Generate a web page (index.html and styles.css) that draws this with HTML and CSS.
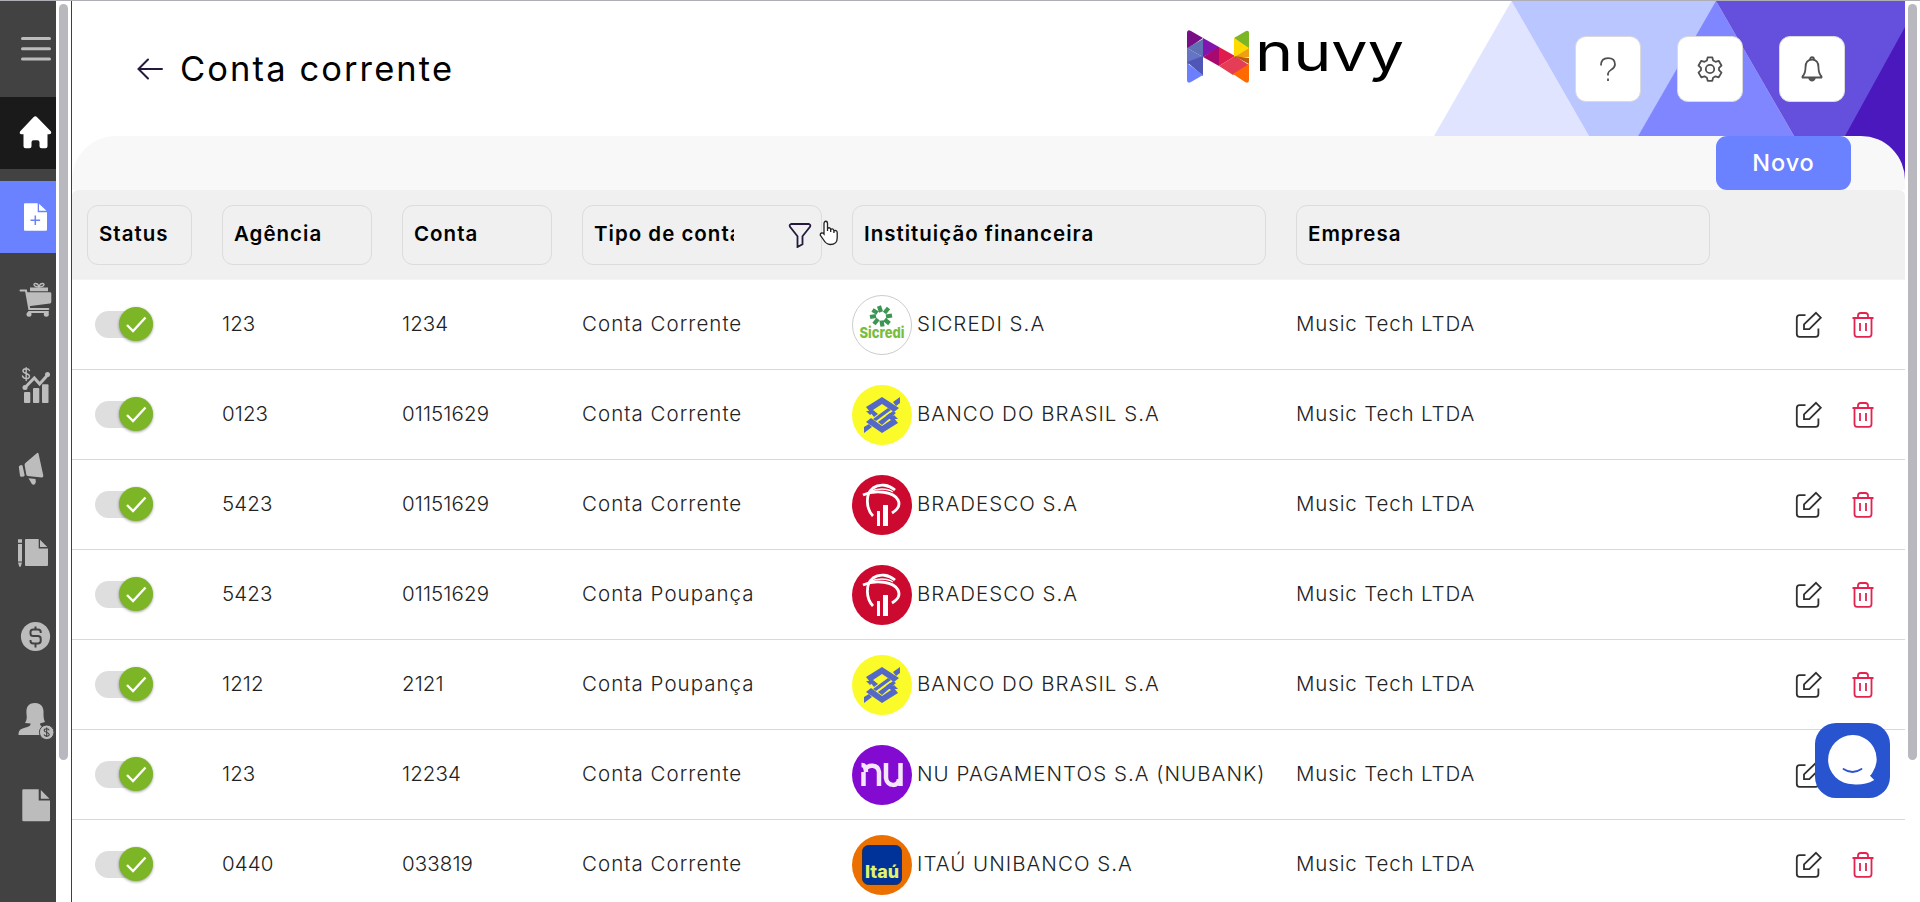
FILE: index.html
```
<!DOCTYPE html>
<html lang="pt-BR">
<head>
  <meta charset="UTF-8" />
  <meta name="viewport" content="width=device-width, initial-scale=1.0" />
  <title>Conta corrente</title>
  <link rel="stylesheet" href="styles.css">
</head>
<body>
  <!-- shared icons -->
  <svg class="sprite" aria-hidden="true">
    <symbol id="icon-edit" viewBox="0 0 28 28">
      <path d="M10.5 4.2H4.6Q1.8 4.2 1.8 7v16q0 2.8 2.8 2.8h16q2.8 0 2.8-2.8v-5.6" />
      <path d="M21 1.8l4.8 4.9L14.3 18.2H9v-4.9z" />
    </symbol>
    <symbol id="icon-trash" viewBox="0 0 24 28">
      <path d="M1.5 7h21M7 6.5V4.6Q7 2 9.6 2h4.8Q17 2 17 4.6v1.9M3.5 7v16q0 2.8 2.500 2.800h12q2.500 0 2.500-2.800V7M9 12v8M15 12v8" />
    </symbol>
    <symbol id="logo-sicredi" viewBox="0 0 60 60">
      <circle cx="30" cy="30" r="29.5" fill="#fff" stroke="#ccc" />
      <g stroke="#3c9553" stroke-width="4.2">
        <path d="M29 17l-2-6M32.500 18l4-5M34 21.500l6-1M32.500 24.500l5 4M29.500 25.500l1 6M26 24l-4 5M24 21l-6 1M25.500 18l-5-3" />
      </g>
      <text x="30" y="43" class="sicredi-text" text-anchor="middle" textLength="45" lengthAdjust="spacingAndGlyphs">Sicredi</text>
    </symbol>
    <symbol id="logo-bb" viewBox="0 0 60 60">
      <circle cx="30" cy="30" r="30" fill="#fbfb29" />
      <g fill="#5468c8">
        <path d="M14 22l16-10 17 11-5 4-12-8-9 6 5 4-4 3z" />
        <path d="M46 38L30 48 14 37l5-4 11 8 9-6-5-4 4-3z" />
        <path d="M14 26h9l-5 4zM46 34h-9l5-4zM41 17l7-5v6l-4 3zM12 42l5-3 3 3-8 6z" />
        <path d="M21 34l15-11 3 2-15 11zM26 37l15-11 3 2-14 12z" />
      </g>
    </symbol>
    <symbol id="logo-bradesco" viewBox="0 0 60 60">
      <circle cx="30" cy="30" r="30" fill="#cc092f" />
      <g fill="none" stroke="#fff">
        <path d="M21 41C14 34 13 19 21 13c7-5 16-3 22 2" stroke-width="2.8" />
        <path d="M11 20c13-6 31-3 35 5 3 6-1 10-6 13" stroke-width="2.8" />
        <path d="M17 17c8-4 18-4 24 0" stroke-width="1.4" />
      </g>
      <path d="M25 36h3v15h-3zM31 30h5v21h-5z" fill="#fff" />
    </symbol>
    <symbol id="logo-nubank" viewBox="0 0 60 60">
      <circle cx="30" cy="30" r="30" fill="#820ad1" />
      <path d="M11.500 41V27M9.500 20c4 0 4.500 4 4.500 7M13 25c3-6 13-6 14 2v14M34 18v15c1 9 13 9 13 1M48.500 18v23" fill="none" stroke="#f4e6fb" stroke-width="4.5" />
    </symbol>
    <symbol id="logo-itau" viewBox="0 0 60 60">
      <circle cx="30" cy="30" r="30" fill="#ec7000" />
      <rect x="10.500" y="10.500" width="39" height="39" rx="6" fill="#003399" stroke="#27314f" stroke-width="1" />
      <text x="30" y="43" class="itau-text" text-anchor="middle" textLength="34" lengthAdjust="spacingAndGlyphs">Itaú</text>
    </symbol>
  </svg>

  <nav class="sidebar">
    <a class="nav-item menu"><svg viewBox="0 0 40 40"><path class="line" d="M6.5 9.500h27M6.500 19.800h27M6.500 30h27" /></svg></a>
    <a class="nav-item home"><svg viewBox="0 0 40 40"><path d="M17.700 4Q19.300 2.600 20.900 4L35 18.500q1 2.800-2 2.800h-1.500v12q0 2-2 2h-4q-2 0-2-2v-4q0-2-2-2h-4q-2 0-2 2v4q0 2-2 2h-4q-2 0-2-2v-12H5.500q-2.500 0-1.500-2.800z" /></svg></a>
    <a class="nav-item active"><svg viewBox="0 0 40 40"><path d="M9 6.300h12.700v8.900H31v17.500q0 1-1 1H9q-1 0-1-1V7.300q0-1 1-1zM23 6.800l7.500 7H23z" /><path class="plus" d="M19.300 18.500v9.600M14.500 23.300h9.600" /></svg></a>
    <a class="nav-item"><svg viewBox="0 0 40 40"><path d="M10.500 11.300H34q1.300 0 1.300 1.300v8.200q0 1.500-1.300 1.700L12.500 25.300zM14 6.500h18v3.700H14z" /><path class="line" d="M4.500 9.500H10l3.300 18.500h19M13 31h19" /><path class="thin" d="M23 6c-6 0-6-4-3-3.500 2 0 3 3.500 3 3.500s1-3.500 3-3.500c3-.5 3 3.500-3 3.500z" /><circle cx="13" cy="33.300" r="2.500" /><circle cx="30.300" cy="33.300" r="2.500" /></svg></a>
    <a class="nav-item"><svg viewBox="0 0 40 40"><rect x="8" y="27" width="6.300" height="11" rx="1" /><rect x="17" y="23" width="6.300" height="15" rx="1" /><rect x="26" y="19.200" width="6.500" height="18.800" rx="1" /><path class="trend" d="M9 22.500l9.300-9.500 5.300 6 8-9" /><circle cx="9" cy="22.500" r="2.500" /><circle cx="31.500" cy="9.500" r="2.500" /><path class="thin" d="M13.500 5.500C12.500 3 7 3 7 6s6.500 2 6.500 5.300-6 3-7-.3M10.200 2.600v13" /></svg></a>
    <a class="nav-item"><svg viewBox="0 0 40 40"><path d="M20.500 4.500q1.500-1.500 2 0l4.800 22q.2 2-1.600 1.900l-14-1.300q-1.200-.2-1.400-1.500L8.600 16q-.1-1.200.8-2zM2.800 17.500q2-2.500 3.700-1l2.200 9.700q-.3 1.800-3.500 1.600-.9 0-1.200-1zM12.500 29.300l7 .7q1 3.500-.6 5.200-1.600 1-3-.2z" /></svg></a>
    <a class="nav-item"><svg viewBox="0 0 40 40"><path d="M10 6h12.700v9.400H32v16.600q0 1-1 1H10q-1 0-1-1V7q0-1 1-1zM24 6.800l7.300 7.300H24zM2 6.200h4v3.600H2zM2 11h4v17.500H2zM2 29.500h4l-1.300 4.300H3.300z" /></svg></a>
    <a class="nav-item"><svg viewBox="0 0 40 40"><circle cx="19.500" cy="19.500" r="14.600" /><path class="dollar" d="M24.700 16v-1q0-2.600-2.600-2.600h-5Q14.500 12.400 14.500 15v1.500q0 2.500 2.600 2.500h4.800q2.800 0 2.800 2.700v2q0 2.800-2.800 2.800h-4.800q-2.600 0-2.600-2.800V23M19.500 9.500v3M19.500 26.500v4" /></svg></a>
    <a class="nav-item"><svg viewBox="0 0 40 40"><path d="M19 2c7 0 9 5 8.500 11 0 4 .5 6 1.500 8l-5 1.500c0 3 3 3.500 5 4l-1 7.500H2.500c0-6 3-6 7-7.500 3-1 5-1 5-4L9 22c2-3 2-6 1.500-9C10 6 12 2 19 2z" /><circle class="badge" cx="30.700" cy="31.300" r="7.300" /><path class="badge-sign" d="M33.200 29.300c-.5-2-5-2-5 .2s5 1.500 5 4-4.500 2-5.200 0M30.700 26.500v9.600" /></svg></a>
    <a class="nav-item"><svg viewBox="0 0 40 40"><path d="M7.500 4.300h15.200v11.100H34v19.600q0 1.200-1.200 1.200H7.500Q6.300 36.200 6.300 35V5.500q0-1.200 1.200-1.200zM24.800 5l8.700 8.700h-8.700z" /></svg></a>
  </nav>
  <div class="scroll-track"><div class="scroll-thumb"></div></div>

  <main>
    <header>
      <svg class="backdrop" viewBox="0 0 472 180">
        <path fill="#e0e4ff" d="M1 135L78.500 0 156 135z" />
        <path fill="#bac6ff" d="M78.500 0H284l-79 135h-49z" />
        <path fill="#8086ff" d="M283 0l78 135H205z" />
        <path fill="#6450dd" d="M283 0h189v135H361z" />
        <path fill="#4a18bc" d="M472 26v154h-60v-45z" />
      </svg>
      <svg class="back" viewBox="0 0 26 22"><path d="M25 11H1.500M11 1.500L1.500 11l9.500 9.500" /></svg>
      <h1>Conta corrente</h1>
      <svg class="brand" viewBox="0 0 220 60" role="img" aria-label="nuvy">
        <path fill="#780f87" d="M0 3q0-4 4-2l12 7L0 19z" />
        <path fill="#5f70b5" d="M0 18l16-9v18z" />
        <path fill="#6574c4" d="M0 18l16 9L0 35z" />
        <path fill="#5056b5" d="M0 32l16-6v20z" />
        <path fill="#6c80ff" d="M0 33l16 12-12 7q-4 2-4-2z" />
        <path fill="#8115ae" d="M16 8l16 9v1L16 27z" />
        <path fill="#a9086f" d="M16 27l16-10v19z" />
        <path fill="#e01c4c" d="M32 17l16 9-16 10z" />
        <path fill="#e53d55" d="M32 36l16-10 14 9-16 10z" />
        <path fill="#ff6a00" d="M46 44l16-10v16q0 4-4 2z" />
        <path fill="#7cb526" d="M47 8L59 1q3-1 3 2v16z" />
        <path fill="#ffd900" d="M47 8l15 10-15 9z" />
        <path fill="#f0a00f" d="M47 27l15-9v9z" />
        <path fill="#bd5c10" d="M47 26l15 2v6z" />
        <text x="68" y="41" textLength="149" lengthAdjust="spacingAndGlyphs">nuvy</text>
      </svg>
      <div class="tools">
        <button aria-label="Ajuda"><svg viewBox="0 0 26 26"><path d="M6 9.500C6 4 9 2.200 13 2.200c4.500 0 7 2.500 7 6.300 0 5-7 5.500-7 9v2M13 22.500v2.500" /></svg></button>
        <button aria-label="Configurações"><svg viewBox="0 0 26 26"><circle cx="13" cy="13" r="4.200" /><path d="M10.700 1.300h4.600l.8 3.200 2.400 1.300 3.200-1 2.800 4.700-2.500 2.400v2.300l2.500 2.400-2.800 4.700-3.200-1-2.400 1.400-.8 3.100h-4.600l-.8-3.100-2.400-1.400-3.200 1-2.800-4.700L4 14.200v-2.300L1.500 9.500l2.800-4.700 3.200 1 2.400-1.300z" stroke-linejoin="round" /></svg></button>
        <button aria-label="Notificações"><svg viewBox="0 0 26 26"><path d="M3.500 20.500C6 18 6.500 16 6.500 11.500 6.500 6 9 3.700 13 3.700s6.500 2.300 6.500 7.800c0 4.500.5 6.500 3 9v1H3.500zM11 3.500c0-3 4-3 4 0" stroke-linejoin="round" /><path d="M9.300 22h7.400c-.5 4.500-6.900 4.500-7.400 0z" fill="#555" stroke="none" /></svg></button>
      </div>
    </header>

    <div class="toolbar"><button class="new">Novo</button></div>

    <section>
      <div class="row head">
        <div class="filter">Status</div>
        <div class="filter">Agência</div>
        <div class="filter">Conta</div>
        <div class="filter"><span class="clip">Tipo de conta</span><svg class="funnel" viewBox="0 0 24 26"><path d="M3 2h18q2 .8 1 2.800l-7.500 9.400v8L9.500 25V14.200L2 4.800Q1 2.800 3 2z" /></svg></div>
        <div class="filter">Instituição financeira</div>
        <div class="filter">Empresa</div>
      </div>
      <div id="accounts"></div>
    </section>
  </main>
  <div class="scroll-track"><div class="scroll-thumb"></div></div>

  <svg class="pointer" viewBox="0 0 20 26"><path d="M5 14V3.500C5 .5 8.500.5 8.500 3.500V11 8.500c1.500-1.500 3-.5 3.200 1V12 9.500c1.500-1.300 3-.3 3.200 1V13v-2c2-1.200 3.300 0 3.300 1.800V18c0 4.500-2.500 6.500-7 6.500-4 0-5.500-2.500-7.200-5.500l-2.800-4c0-2.500 2.500-2.500 3.800-1z" /></svg>

  <button class="chat" aria-label="Chat">
    <svg viewBox="0 0 75 75">
      <path d="M37.500 12a24 24 0 0 1 20 37.500q-1 2-2.500 3.200l4.200 4.300C52 61.500 44 62 38 61.300A24.500 24.500 0 0 1 37.500 12z" fill="#fff" />
      <path d="M28.500 46q9 6 18 0" fill="none" stroke="#2954cf" stroke-width="1.800" stroke-linecap="round" />
    </svg>
  </button>

  <script>
    const accounts = [
      { agencia: '123', conta: '1234', tipo: 'Conta Corrente', logo: 'sicredi', banco: 'SICREDI S.A' },
      { agencia: '0123', conta: '01151629', tipo: 'Conta Corrente', logo: 'bb', banco: 'BANCO DO BRASIL S.A' },
      { agencia: '5423', conta: '01151629', tipo: 'Conta Corrente', logo: 'bradesco', banco: 'BRADESCO S.A' },
      { agencia: '5423', conta: '01151629', tipo: 'Conta Poupança', logo: 'bradesco', banco: 'BRADESCO S.A' },
      { agencia: '1212', conta: '2121', tipo: 'Conta Poupança', logo: 'bb', banco: 'BANCO DO BRASIL S.A' },
      { agencia: '123', conta: '12234', tipo: 'Conta Corrente', logo: 'nubank', banco: 'NU PAGAMENTOS S.A (NUBANK)' },
      { agencia: '0440', conta: '033819', tipo: 'Conta Corrente', logo: 'itau', banco: 'ITAÚ UNIBANCO S.A' }
    ];

    document.getElementById('accounts').innerHTML = accounts.map((a) => `
      <div class="row">
        <div class="toggle"><span class="knob"><svg viewBox="0 0 34 34"><path d="M8 18l6 6L26.500 10.500" /></svg></span></div>
        <span class="num">${a.agencia}</span>
        <span class="num">${a.conta}</span>
        <span>${a.tipo}</span>
        <div class="bank"><svg><use href="#logo-${a.logo}" /></svg><span class="bank-name">${a.banco}</span></div>
        <span class="company">Music Tech LTDA</span>
        <div class="actions">
          <svg class="edit"><use href="#icon-edit" /></svg>
          <svg class="trash"><use href="#icon-trash" /></svg>
        </div>
      </div>`).join('');
  </script>
</body>
</html>
```
FILE: styles.css
```
* {
  box-sizing: border-box;
}
body {
  margin: 0;
  height: 100vh;
  display: flex;
  overflow: hidden;
  border-top: 1px solid #afaeb5;
  background: #fff;
  color: #222;
  font-family: Inter, sans-serif;
  font-size: 20.5px;
}
button {
  border: 0;
  padding: 0;
  font: inherit;
}
.sprite {
  display: none;
}

/* sidebar */
.sidebar {
  width: 56px;
  flex: none;
  background: #424242;
  display: flex;
  flex-direction: column;
  gap: 12px;
  padding-top: 12px;
}
.nav-item {
  height: 72px;
  flex: none;
  display: flex;
  align-items: center;
  justify-content: flex-end;
}
.nav-item svg {
  width: 40px;
  height: 40px;
  fill: #bcbcbc;
}
.nav-item .line,
.nav-item .thin,
.nav-item .trend {
  fill: none;
  stroke: #bcbcbc;
  stroke-width: 2;
  stroke-linecap: round;
}
.menu .line {
  stroke-width: 3;
}
.nav-item .thin {
  stroke-width: 1.4;
}
.nav-item .trend {
  stroke-width: 3;
}
.home {
  background: #1a1a1a;
}
.active {
  background: #6a82ff;
}
.home svg,
.active svg {
  fill: #fff;
}
.plus {
  stroke: #6a82ff;
  stroke-width: 1.5;
}
.dollar {
  fill: none;
  stroke: #424242;
  stroke-width: 2;
}
.badge {
  stroke: #424242;
  stroke-width: 1;
}
.badge-sign {
  fill: none;
  stroke: #424242;
  stroke-width: 1.1;
}

.scroll-track {
  width: 15px;
  flex: none;
  padding: 3px 3px 0;
}
.scroll-thumb {
  width: 9px;
  height: 756px;
  border-radius: 5px;
  background: #b9b8bf;
}

/* page */
main {
  flex: 1;
  min-width: 0;
  border-left: 1px solid #3f3f3f;
}
header {
  position: relative;
  height: 135px;
  display: flex;
  align-items: center;
  padding: 0 60px 0 65px;
}
.backdrop {
  position: absolute;
  top: 0;
  right: 0;
  width: 472px;
  height: 180px;
}
.back {
  width: 26px;
  height: 22px;
  fill: none;
  stroke: #251a3d;
  stroke-width: 2;
  stroke-linecap: round;
}
h1 {
  margin: 0 0 0 17px;
  width: 1005px;
  color: #000;
  font-size: 34.5px;
  font-weight: 400;
  letter-spacing: 2.1px;
  white-space: nowrap;
}
.brand {
  flex: none;
  width: 220px;
  height: 60px;
  margin: -18px 0 0 2px;
  overflow: visible;
}
.brand text {
  fill: #000;
  font-size: 53px;
  font-weight: 400;
}
.tools {
  position: relative;
  margin-left: auto;
  display: flex;
  gap: 36px;
}
.tools button {
  width: 66px;
  height: 66px;
  border: 1px solid #dadada;
  border-radius: 11px;
  background: #fff;
  display: flex;
  align-items: center;
  justify-content: center;
}
.tools svg {
  width: 26px;
  height: 26px;
  fill: none;
  stroke: #505050;
  stroke-width: 1.8;
}
.toolbar {
  position: relative;
  height: 54px;
  display: flex;
  justify-content: flex-end;
  padding-right: 54px;
  background: #f8f8f8;
  border-radius: 44px 44px 0 0;
}
.new {
  width: 135px;
  height: 54px;
  padding-bottom: 2px;
  border-radius: 11px;
  background: #6a82ff;
  color: #fff;
  font-size: 23.5px;
  font-weight: 500;
  letter-spacing: .9px;
}

/* table */
.row {
  height: 90px;
  display: grid;
  grid-template-columns: 105px 150px 150px 240px 414px 414px 1fr;
  column-gap: 30px;
  align-items: center;
  padding: 0 30px 0 15px;
  border-bottom: 1px solid #d9d9dc;
  white-space: nowrap;
}
.row > span,
.bank-name {
  padding-bottom: 2px;
  font-weight: 300;
  letter-spacing: 1.03px;
}
.row > .num {
  letter-spacing: .1px;
}
.row > .company {
  letter-spacing: .85px;
}
.head {
  background: #f0f0f0;
  border-radius: 6px 6px 0 0;
  border-bottom-color: #f4f4f4;
  color: #000;
  font-weight: 600;
  letter-spacing: 1px;
}
.filter {
  height: 60px;
  display: flex;
  align-items: center;
  justify-content: space-between;
  padding: 0 9px 2px 11px;
  border: 1px solid #dcdcdc;
  border-radius: 11px;
}
.clip {
  width: 140px;
  overflow: hidden;
}
.funnel {
  width: 24px;
  height: 26px;
  margin-top: 2px;
  fill: none;
  stroke: #251a3d;
  stroke-width: 1.8;
}
.toggle {
  width: 58px;
  height: 27px;
  margin-left: 8px;
  display: flex;
  align-items: center;
  justify-content: flex-end;
  border-radius: 14px;
  background: #dedede;
}
.knob {
  width: 34px;
  height: 34px;
  flex: none;
  margin-bottom: 2px;
  border-radius: 50%;
  background: #7cb526;
  box-shadow: 0 1px 3px rgba(0,0,0,.4);
}
.knob path {
  fill: none;
  stroke: #fff;
  stroke-width: 2.4;
}
.bank {
  display: flex;
  align-items: center;
  gap: 5px;
}
.bank svg {
  width: 60px;
  height: 60px;
  flex: none;
}
.sicredi-text {
  fill: #79bd3c;
  font-size: 15px;
  font-weight: 800;
  letter-spacing: 0;
}
.itau-text {
  fill: #e4f16b;
  font-size: 17px;
  font-weight: 800;
  letter-spacing: 0;
}
.actions {
  display: flex;
  justify-content: flex-end;
  gap: 28px;
}
.actions svg {
  height: 28px;
  fill: none;
  stroke-width: 1.8;
}
.edit {
  width: 28px;
  stroke: #303030;
}
.trash {
  width: 24px;
  stroke: #e32450;
}

.pointer {
  position: absolute;
  left: 819px;
  top: 220px;
  width: 20px;
  height: 26px;
  fill: #fff;
  stroke: #222;
  stroke-width: 1.3;
}
.chat {
  position: absolute;
  left: 1815px;
  top: 723px;
  width: 75px;
  height: 75px;
  border-radius: 21px;
  background: #2954cf;
}
```
